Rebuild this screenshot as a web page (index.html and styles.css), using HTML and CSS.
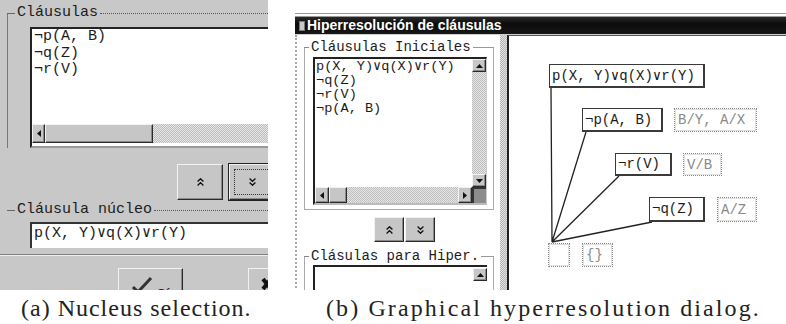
FILE: index.html
```html
<!DOCTYPE html>
<html><head><meta charset="utf-8">
<title>Hiperresolución de cláusulas</title>
<link rel="stylesheet" href="styles.css">
</head>
<body>
<div class="figure">
 <div class="shots">

  <!-- (a) seleccion del nucleo -->
  <div class="shot-a">
   <div class="grp-a">
    <div class="head"><span>Cláusulas</span></div>
    <div class="list-a">
     <div class="items">
      <div>¬p(A, B)</div>
      <div>¬q(Z)</div>
      <div>¬r(V)</div>
     </div>
     <div class="hscroll">
      <span class="raised arrow"><svg width="4" height="7" viewBox="0 0 4 7"><path d="M4 0L0 3.5L4 7Z" fill="#111"/></svg></span>
      <span class="raised thumb-a"></span>
      <span class="track"></span>
     </div>
    </div>
   </div>
   <div class="btns-a">
    <span class="raised btn-a"><svg width="7" height="8" viewBox="0 0 7 8"><path d="M0.6 3.6L3.5 0.8L6.4 3.6M0.6 7.4L3.5 4.6L6.4 7.4" fill="none" stroke="#111" stroke-width="1.4"/></svg></span>
    <span class="raised btn-a focus"><svg width="7" height="8" viewBox="0 0 7 8"><path d="M0.6 0.6L3.5 3.4L6.4 0.6M0.6 4.4L3.5 7.2L6.4 4.4" fill="none" stroke="#111" stroke-width="1.4"/></svg></span>
   </div>
   <div class="head head-2"><span>Cláusula núcleo</span></div>
   <div class="text-a">p(X, Y)∨q(X)∨r(Y)</div>
   <div class="sep"></div>
   <div class="actions-a">
    <span class="raised act ok"><svg width="22" height="16" viewBox="0 0 22 16"><path d="M2 10L7 15L20 1" fill="none" stroke="#333" stroke-width="3"/></svg><span>Sí</span></span>
    <span class="raised act cancel"><svg width="12" height="14" viewBox="0 0 12 14"><path d="M2 2L10 12M10 2L2 12" stroke="#111" stroke-width="4"/></svg></span>
   </div>
  </div>

  <!-- (b) dialogo grafico -->
  <div class="shot-b">
   <div class="title"><span class="ticon"></span>Hiperresolución de cláusulas</div>
   <div class="body-b">
    <div class="pane">
     <div class="grp-b">
      <div class="head head-b"><span>Cláusulas Iniciales</span></div>
      <div class="list-b">
       <div class="items-b">
        <div>p(X, Y)∨q(X)∨r(Y)</div>
        <div>¬q(Z)</div>
        <div>¬r(V)</div>
        <div>¬p(A, B)</div>
       </div>
       <div class="vscroll">
        <span class="raised sarrow"><svg width="7" height="4" viewBox="0 0 7 4"><path d="M0 4L3.5 0L7 4Z" fill="#111"/></svg></span>
        <span class="track"></span>
        <span class="raised sarrow"><svg width="7" height="4" viewBox="0 0 7 4"><path d="M0 0L3.5 4L7 0Z" fill="#111"/></svg></span>
       </div>
       <div class="hscroll-b">
        <span class="raised sarrow"><svg width="4" height="7" viewBox="0 0 4 7"><path d="M4 0L0 3.5L4 7Z" fill="#111"/></svg></span>
        <span class="raised thumb-b"></span>
        <span class="track"></span>
        <span class="raised sarrow"><svg width="4" height="7" viewBox="0 0 4 7"><path d="M0 0L4 3.5L0 7Z" fill="#111"/></svg></span>
       </div>
       <div class="corner"></div>
      </div>
     </div>
     <div class="btns-b">
      <span class="raised btn-b"><svg width="7" height="8" viewBox="0 0 7 8"><path d="M0.6 3.6L3.5 0.8L6.4 3.6M0.6 7.4L3.5 4.6L6.4 7.4" fill="none" stroke="#111" stroke-width="1.4"/></svg></span>
      <span class="raised btn-b"><svg width="7" height="8" viewBox="0 0 7 8"><path d="M0.6 0.6L3.5 3.4L6.4 0.6M0.6 4.4L3.5 7.2L6.4 4.4" fill="none" stroke="#111" stroke-width="1.4"/></svg></span>
     </div>
     <div class="grp-b grp-b2">
      <div class="head head-b"><span>Clásulas para Hiper.</span></div>
      <div class="list-b2">
       <span class="raised sarrow"><svg width="7" height="4" viewBox="0 0 7 4"><path d="M0 4L3.5 0L7 4Z" fill="#111"/></svg></span>
      </div>
     </div>
    </div>
    <div class="splitter"></div>
    <div class="canvas">
     <svg class="edges" width="277" height="254">
      <path d="M43 206L42 52M43 206L77 96M43 206L110 140M43 206L143 186" stroke="#222" stroke-width="1.3" fill="none"/>
     </svg>
     <div class="node" style="left:40px;top:28px;width:156px;height:24px">p(X, Y)∨q(X)∨r(Y)</div>
     <div class="node" style="left:73px;top:72px;width:81px;height:24px">¬p(A, B)</div>
     <div class="subst" style="left:165px;top:72px;width:83px;height:24px">B/Y, A/X</div>
     <div class="node" style="left:106px;top:117px;width:57px;height:23px">¬r(V)</div>
     <div class="subst" style="left:174px;top:117px;width:39px;height:23px">V/B</div>
     <div class="node" style="left:140px;top:161px;width:56px;height:25px">¬q(Z)</div>
     <div class="subst" style="left:208px;top:161px;width:40px;height:25px">A/Z</div>
     <div class="subst" style="left:39px;top:207px;width:22px;height:24px"></div>
     <div class="subst" style="left:73px;top:207px;width:31px;height:24px">{}</div>
    </div>
   </div>
  </div>

 </div>
 <div class="captions">
  <div class="cap cap-a">(a) Nucleus selection.</div>
  <div class="cap cap-b">(b) Graphical hyperresolution dialog.</div>
 </div>
</div>
</body>
</html>
```

FILE: styles.css
```css
body {
	margin: 0px;
	background: #fff;
}
.figure {
	width: 786px;
	height: 324px;
	overflow: hidden;
}
.shots {
	display: flex;
	height: 290px;
}

/* ---- comun ---- */
.raised {
	box-sizing: border-box;
	display: flex;
	align-items: center;
	justify-content: center;
	background: #c6c6c6;
	border: 1px solid;
	border-color: #f2f2f2 #2a2a2a #2a2a2a #f2f2f2;
	box-shadow: inset -1px -1px #8a8a8a;
	flex: none;
}
.track {
	flex: 1;
	background: repeating-conic-gradient(#e6e6e6 0 25%, #bdbdbd 0 50%) 0 0 / 2px 2px;
}
.head {
	display: flex;
	align-items: center;
	height: 16px;
}
.head::before {
	content: "";
	width: 8px;
	margin-right: 2px;
	border-top: 1px solid #666;
}
.head::after {
	content: "";
	flex: 1;
	margin-left: 2px;
	border-top: 1px dotted #555;
}

/* ---- (a) ---- */
.shot-a {
	width: 268px;
	height: 290px;
	flex: none;
	overflow: hidden;
	box-sizing: border-box;
	padding-left: 7px;
	background: #c8c8c8;
	font: 15px/16px "Liberation Mono", monospace;
	color: #1c1c1c;
}
.grp-a {
	padding-top: 5px;
	background: linear-gradient(#777, #777) 0 13px / 1px 138px no-repeat;
}
.list-a {
	box-sizing: border-box;
	margin: 6px 0 0 23px;
	width: 250px;
	height: 121px;
	display: flex;
	flex-direction: column;
	background: #fff;
	border-top: 2px solid #222;
	border-left: 2px solid #222;
	border-bottom: 2px solid #9a9a9a;
}
.items {
	flex: 1;
	padding-left: 2px;
	line-height: 16.5px;
}
.hscroll {
	display: flex;
	height: 19px;
	margin-bottom: 3px;
}
.hscroll .arrow {
	width: 13px;
}
.thumb-a {
	width: 108px;
}
.btns-a {
	display: flex;
	gap: 6px;
	margin: 16px 0 0 170px;
}
.btn-a {
	width: 46px;
	height: 36px;
}
.btn-a.focus {
	box-shadow: 0 0 0 1px #222, inset -1px -1px #8a8a8a;
	outline: 1px dotted #333;
	outline-offset: -6px;
}
.head-2 {
	margin-top: 2px;
}
.text-a {
	box-sizing: border-box;
	margin: 4px 0 0 23px;
	width: 250px;
	height: 26px;
	padding-left: 2px;
	line-height: 20px;
	background: #fff;
	border-top: 2px solid #333;
	border-left: 2px solid #333;
	white-space: nowrap;
}
.sep {
	margin: 6px 0 0 -7px;
	border-top: 1px solid #808080;
	border-bottom: 1px solid #efefef;
}
.actions-a {
	display: flex;
	margin: 12px 0 0 111px;
	gap: 65px;
}
.act {
	height: 36px;
	align-items: flex-start;
	padding-top: 8px;
}
.ok {
	width: 65px;
	gap: 3px;
	font: 14px/16px "Liberation Sans", sans-serif;
}
.ok span {
	padding-top: 9px;
}
.cancel {
	width: 40px;
	justify-content: flex-start;
	padding-left: 12px;
}

/* ---- (b) ---- */
.shot-b {
	box-sizing: border-box;
	width: 491px;
	height: 277px;
	margin: 13px 0 0 27px;
	flex: none;
	overflow: hidden;
	display: flex;
	flex-direction: column;
	background: #fff;
	border-top: 4px double #9a9a9a;
	font: 13.6px/14px "Liberation Mono", monospace;
	color: #1c1c1c;
}
.title {
	height: 17px;
	display: flex;
	align-items: center;
	gap: 2px;
	padding-left: 4px;
	background: linear-gradient(#2a2a2a, #0c0c0c 40%, #161616);
	color: #fff;
	font: bold 14px/17px "Liberation Sans", sans-serif;
	border-bottom: 1px solid #d0d0d0;
	white-space: nowrap;
}
.ticon {
	width: 6px;
	height: 10px;
	background: #c8c8c8;
	border: 1px solid #777;
	box-sizing: border-box;
}
.body-b {
	flex: 1;
	display: flex;
}
.pane {
	box-sizing: border-box;
	width: 205px;
	flex: none;
	padding-left: 7px;
	border-left: 2px dotted #a8a8a8;
}
.grp-b {
	box-sizing: border-box;
	width: 190px;
	margin-top: 4px;
	padding-bottom: 5px;
	background:
		linear-gradient(#aaa, #aaa) left 8px / 1px 100% no-repeat,
		linear-gradient(#aaa, #aaa) right 8px / 1px 100% no-repeat,
		linear-gradient(#aaa, #aaa) bottom / 100% 1px no-repeat;
}
.head-b {
	font-size: 14px;
}
.head-b::before {
	width: 5px;
	border-top-color: #888;
}
.head-b::after {
	border-top: 1px solid #999;
}
.list-b {
	box-sizing: border-box;
	margin: 2px 0 0 9px;
	width: 174px;
	height: 148px;
	display: grid;
	grid-template-columns: 1fr 14px;
	grid-template-rows: 1fr 16px;
	background: #fff;
	border-top: 2px solid #222;
	border-left: 2px solid #222;
	border-right: 1px solid #ccc;
	border-bottom: 2px solid #bbb;
}
.items-b {
	padding: 1px 0 0 1px;
	white-space: nowrap;
}
.vscroll {
	display: flex;
	flex-direction: column;
}
.sarrow {
	width: 14px;
	height: 13px;
}
.hscroll-b {
	display: flex;
}
.hscroll-b .sarrow {
	height: 16px;
}
.thumb-b {
	width: 18px;
}
.corner {
	background: #8c8c8c;
	border-top: 2px solid #333;
	border-left: 2px solid #333;
}
.btns-b {
	display: flex;
	gap: 1px;
	margin: 7px 0 0 70px;
}
.btn-b {
	width: 30px;
	height: 25px;
}
.grp-b2 {
	margin-top: 6px;
	height: 60px;
}
.list-b2 {
	box-sizing: border-box;
	margin: 1px 0 0 9px;
	width: 174px;
	height: 40px;
	display: flex;
	justify-content: flex-end;
	align-items: flex-start;
	padding-top: 1px;
	background: #fff;
	border-top: 2px solid #222;
	border-left: 2px solid #222;
}
.splitter {
	width: 7px;
	flex: none;
	background: repeating-conic-gradient(#e2e2e2 0 25%, #b4b4b4 0 50%) 0 0 / 2px 2px;
}
.canvas {
	flex: 1;
	position: relative;
	background: #fff;
	border-left: 2px solid #1e1e1e;
	border-top: 1px solid #555;
	font-size: 14px;
}
.edges {
	position: absolute;
	left: 0;
	top: 0;
}
.node, .subst {
	position: absolute;
	box-sizing: border-box;
	display: flex;
	align-items: center;
	padding-left: 2px;
	white-space: nowrap;
	background: #fff;
}
.node {
	border: 2px solid #3a3a3a;
	border-top-width: 1px;
	border-left-width: 1px;
	color: #1a1a1a;
}
.subst {
	border: 1px dotted #8a8a8a;
	box-shadow: inset 0 0 0 1px #e0e0e0;
	color: #8a8a8a;
	padding-left: 3px;
}

/* ---- pies ---- */
.captions {
	display: flex;
	height: 34px;
	padding-top: 3px;
	font: 24px/30px "Liberation Serif", serif;
	color: #222;
	white-space: nowrap;
}
.cap-a {
	margin-left: 21px;
	width: 305px;
	letter-spacing: 1px;
}
.cap-b {
	letter-spacing: 2.1px;
}
```
